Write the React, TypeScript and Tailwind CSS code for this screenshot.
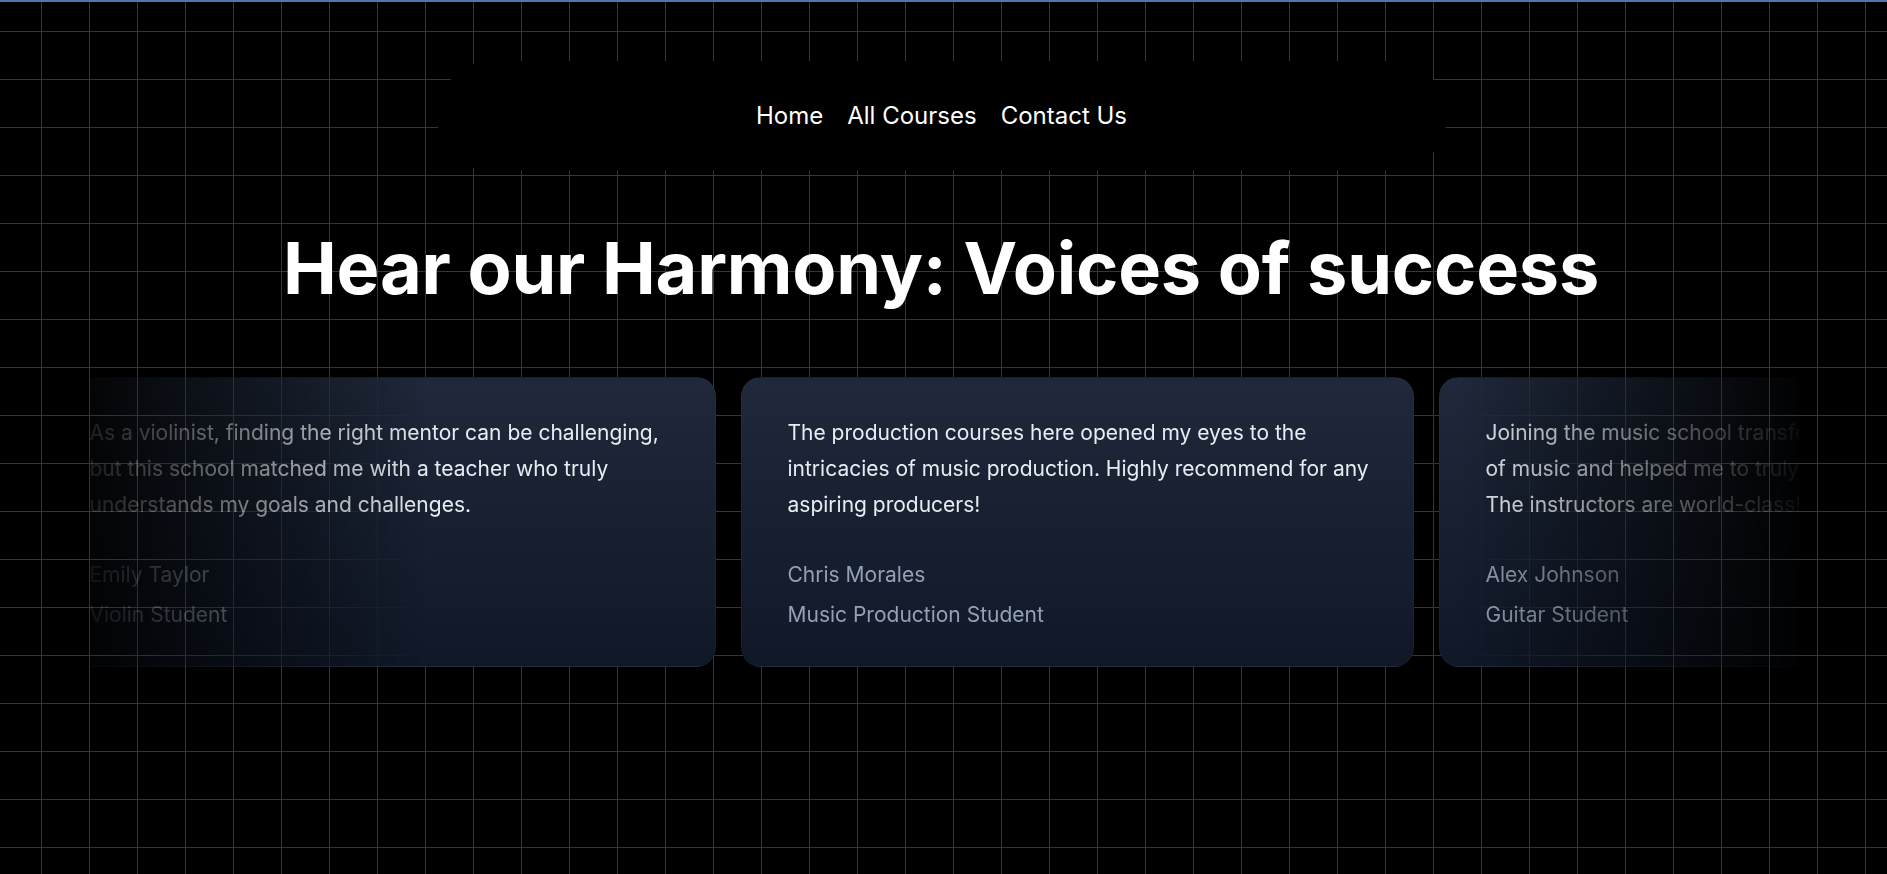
import React from 'react';

const testimonials = [
    {
        quote: "As a violinist, finding the right mentor can be challenging, but this school matched me with a teacher who truly understands my goals and challenges.",
        name: "Emily Taylor",
        role: "Violin Student"
    },
    {
        quote: "The production courses here opened my eyes to the intricacies of music production. Highly recommend for any aspiring producers!",
        name: "Chris Morales",
        role: "Music Production Student"
    },
    {
        quote: "Joining the music school transformed my understanding\nof music and helped me to truly express my creativity.\nThe instructors are world-class!",
        name: "Alex Johnson",
        role: "Guitar Student"
    }
];

const navLinks = ["Home", "All Courses", "Contact Us"];

const App = () => {
    return (
        <div className="min-h-screen w-full bg-black bg-[linear-gradient(to_right,#363636_1px,transparent_1px),linear-gradient(to_bottom,#363636_1px,transparent_1px)] bg-[size:48px_48px] bg-[position:41px_31px] font-['Inter','Noto_Sans',sans-serif] text-white overflow-hidden">
            {/* top accent bar */}
            <div className="h-[2px] w-full bg-[#4a78ae]"></div>

            {/* Nav pill */}
            <div className="flex justify-center pt-[59px] pr-[4px]">
                <nav className="flex h-[110px] w-[1010px] items-center justify-center gap-[24px] rounded-full bg-black">
                    {navLinks.map((link) => (
                        <a key={link} href="#" className="text-[24px] leading-none text-white">
                            {link}
                        </a>
                    ))}
                </nav>
            </div>

            {/* Heading */}
            <h1 className="mt-[61px] pr-[5px] text-center text-[72px] font-bold leading-none tracking-[-0.2px] text-white">
                Hear our Harmony: Voices of success
            </h1>

            {/* Testimonials carousel */}
            <div className="mx-auto mt-[73px] w-[1710px] overflow-hidden [mask-image:linear-gradient(to_right,rgba(0,0,0,0.12),black_20%,black_80%,rgba(0,0,0,0.05))] [-webkit-mask-image:linear-gradient(to_right,rgba(0,0,0,0.12),black_20%,black_80%,rgba(0,0,0,0.05))]">
                <div className="flex w-max -translate-x-[46px] gap-[25px]">
                    {testimonials.map((item, index) => (
                        <div
                            key={index}
                            className="flex h-[290px] w-[673px] shrink-0 flex-col rounded-[20px] border border-white/[0.03] bg-gradient-to-b from-[#1f293b] to-[#101828] pl-[46px] pr-[36px] pt-[37px]"
                        >
                            <p className="whitespace-pre-line text-[21px] leading-[36px] text-[#e8ecf2]">
                                {item.quote}
                            </p>
                            <div className="mt-[32px] text-[21px] leading-[40px] text-[#94a0b4]">
                                <p>{item.name}</p>
                                <p>{item.role}</p>
                            </div>
                        </div>
                    ))}
                </div>
            </div>
        </div>
    );
};

export default App;
